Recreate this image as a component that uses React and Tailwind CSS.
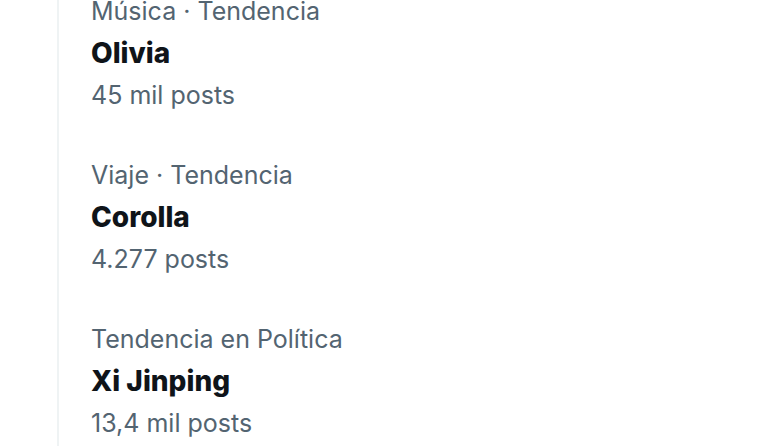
export default function App() {
  const items = [
    { cat: "Música · Tendencia", name: "Olivia", posts: "45 mil posts" },
    { cat: "Viaje · Tendencia", name: "Corolla", posts: "4.277 posts" },
    { cat: "Tendencia en Política", name: "Xi Jinping", posts: "13,4 mil posts" },
  ];
  return (
    <div className="w-[768px] h-[446px] overflow-hidden bg-white" style={{ fontFamily: "Inter, 'Noto Sans', sans-serif" }}>
      <div className="ml-[57px] h-full border-l-2 border-[#eff3f4] flex flex-col">
        <div className="mt-[-29px] flex flex-col">
          {items.map((it) => (
            <div key={it.name} className="pl-[32px] py-[19px]">
              <div className="text-[25px] leading-[42px] text-[#536471]">{it.cat}</div>
              <div className="text-[28px] leading-[42px] font-extrabold text-[#0f1419]">{it.name}</div>
              <div className="text-[25px] leading-[42px] text-[#536471]">{it.posts}</div>
            </div>
          ))}
        </div>
      </div>
    </div>
  );
}
